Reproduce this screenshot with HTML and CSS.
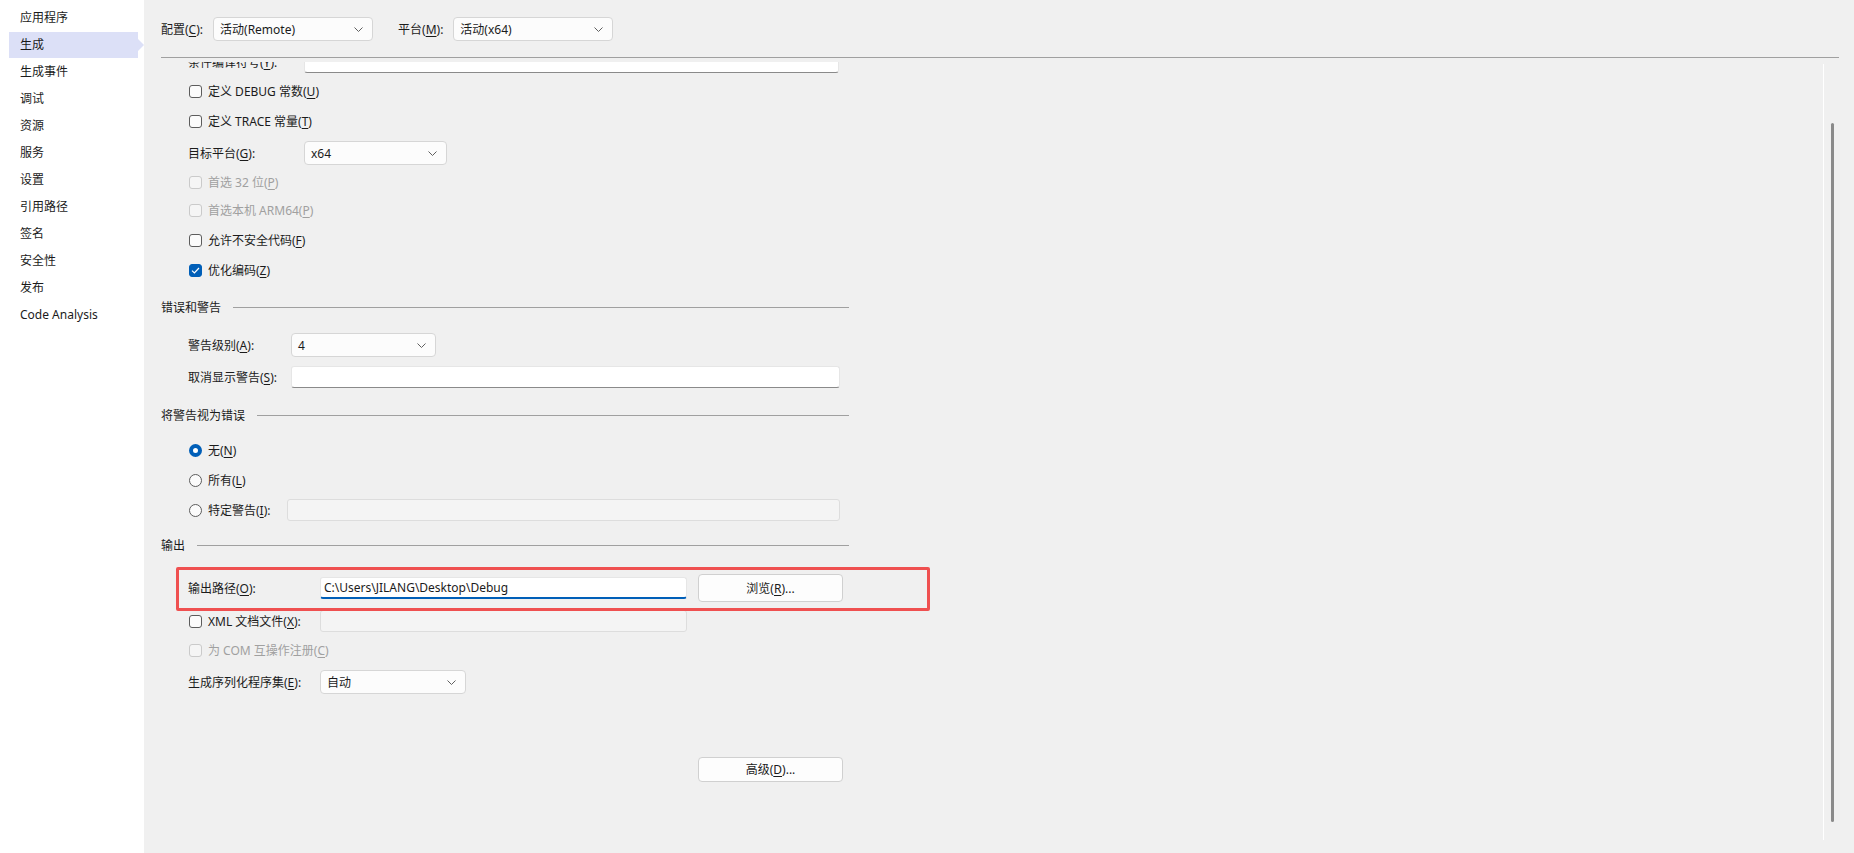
FILE: index.html
```html
<!DOCTYPE html>
<html lang="zh-CN">
<head>
    <meta charset="UTF-8">
    <title>生成</title>
    <link rel="stylesheet" href="styles.css">
</head>
<body>

    <div class="nav">
        <div class="nav-item">应用程序</div>
        <div class="nav-item active">生成</div>
        <div class="nav-item">生成事件</div>
        <div class="nav-item">调试</div>
        <div class="nav-item">资源</div>
        <div class="nav-item">服务</div>
        <div class="nav-item">设置</div>
        <div class="nav-item">引用路径</div>
        <div class="nav-item">签名</div>
        <div class="nav-item">安全性</div>
        <div class="nav-item">发布</div>
        <div class="nav-item">Code Analysis</div>
    </div>

    <div class="main">
        <div class="toolbar">
            <span class="top-label">配置(<u>C</u>):</span>
            <div class="select top">活动(Remote)<svg class="chev" width="9" height="5" viewBox="0 0 9 5"><path d="M0.5 0.5 L4.5 4.5 L8.5 0.5"/></svg></div>
            <span class="top-label second">平台(<u>M</u>):</span>
            <div class="select top">活动(x64)<svg class="chev" width="9" height="5" viewBox="0 0 9 5"><path d="M0.5 0.5 L4.5 4.5 L8.5 0.5"/></svg></div>
        </div>
        <div class="sep"></div>

        <div class="area">
            <div class="viewport">
                <div class="content">
                    <!-- 上方被滚动遮住的一行 -->
                    <div class="row first">
                        <span class="lbl lbl-a">条件编译符号(<u>Y</u>):</span>
                        <div class="input w535"></div>
                    </div>
                    <div class="row mt5"><span class="check"></span>定义 DEBUG 常数(<u>U</u>)</div>
                    <div class="row mt6"><span class="check"></span>定义 TRACE 常量(<u>T</u>)</div>
                    <div class="row mt8">
                        <span class="lbl lbl-a">目标平台(<u>G</u>):</span>
                        <div class="select w143">x64<svg class="chev" width="9" height="5" viewBox="0 0 9 5"><path d="M0.5 0.5 L4.5 4.5 L8.5 0.5"/></svg></div>
                    </div>
                    <div class="row mt5 dis"><span class="check off"></span>首选 32 位(<u>P</u>)</div>
                    <div class="row mt4 dis"><span class="check off"></span>首选本机 ARM64(<u>P</u>)</div>
                    <div class="row mt6"><span class="check"></span>允许不安全代码(<u>F</u>)</div>
                    <div class="row mt6"><span class="check on"><svg width="9" height="7" viewBox="0 0 9 7"><path d="M1 3.6 L3.4 6 L8 1" fill="none" stroke="#fff" stroke-width="1.2"/></svg></span>优化编码(<u>Z</u>)</div>

                    <div class="group-title mt13">错误和警告</div>
                    <div class="row mt14">
                        <span class="lbl lbl-b">警告级别(<u>A</u>):</span>
                        <div class="select w145">4<svg class="chev" width="9" height="5" viewBox="0 0 9 5"><path d="M0.5 0.5 L4.5 4.5 L8.5 0.5"/></svg></div>
                    </div>
                    <div class="row mt8">
                        <span class="lbl lbl-b">取消显示警告(<u>S</u>):</span>
                        <div class="input w549"></div>
                    </div>

                    <div class="group-title mt14">将警告视为错误</div>
                    <div class="row mt11"><span class="radio on"></span>无(<u>N</u>)</div>
                    <div class="row mt6"><span class="radio"></span>所有(<u>L</u>)</div>
                    <div class="row mt6">
                        <span class="lbl lbl-d"><span class="radio"></span>特定警告(<u>I</u>):</span>
                        <div class="input off w553"></div>
                    </div>

                    <div class="group-title mt11">输出</div>
                    <div class="row mt19 marked">
                        <span class="lbl lbl-c">输出路径(<u>O</u>):</span>
                        <div class="input focus w367">C:\Users\JILANG\Desktop\Debug</div>
                        <div class="btn">浏览(<u>R</u>)...</div>
                    </div>
                    <div class="row mt9">
                        <span class="lbl lbl-c"><span class="check"></span>XML 文档文件(<u>X</u>):</span>
                        <div class="input off w367"></div>
                    </div>
                    <div class="row mt5 dis"><span class="check off"></span>为 COM 互操作注册(<u>C</u>)</div>
                    <div class="row mt8">
                        <span class="lbl lbl-c">生成序列化程序集(<u>E</u>):</span>
                        <div class="select w146">自动<svg class="chev" width="9" height="5" viewBox="0 0 9 5"><path d="M0.5 0.5 L4.5 4.5 L8.5 0.5"/></svg></div>
                    </div>

                    <div class="row mt63">
                        <div class="btn adv">高级(<u>D</u>)...</div>
                    </div>
                </div>
            </div>
            <div class="vscroll"><div class="thumb"></div></div>
        </div>
    </div>

</body>
</html>
```

FILE: styles.css
```css
body { margin: 0; height: 853px; overflow: hidden; display: flex; background: #f0f0f0; color: #1b1b1b; font-family: "Noto Sans", "Noto Sans CJK SC", sans-serif; font-size: 12px; }
u { text-underline-offset: 2px; }

/* 左侧导航 */
.nav { width: 144px; flex: none; background: #fff; padding-top: 5px; box-sizing: border-box; }
.nav-item { position: relative; height: 26px; line-height: 26px; margin: 0 6px 1px 9px; padding-left: 11px; }
.nav-item.active { background: #dce0f7; }
.nav-item.active::after { content: ""; position: absolute; right: -6px; top: 7px; border-left: 6px solid #dce0f7; border-top: 6px solid transparent; border-bottom: 6px solid transparent; }

/* 右侧主区域 */
.main { flex: 1; min-width: 0; display: flex; flex-direction: column; }
.toolbar { display: flex; align-items: center; padding: 17px 0 0 17px; }
.top-label { margin-right: 10px; }
.top-label.second { margin-left: 25px; }
.sep { height: 1px; background: #a0a0a0; margin: 16px 15px 0 17px; }

.area { flex: 1; min-height: 0; display: flex; }
.viewport { flex: 1; overflow: hidden; margin-top: 4px; }
.content { margin-top: -12px; }
.vscroll { width: 31px; flex: none; box-sizing: border-box; margin: 6px 0 13px; border-left: 1px solid #fff; padding-left: 7px; }
.thumb { width: 3px; height: 699px; margin-top: 59px; background: #8a8a8a; border-radius: 2px; }

/* 行 */
.row { display: flex; align-items: center; height: 24px; margin-left: 44px; }
.row.dis { color: #a0a0a0; }
.mt4 { margin-top: 4px; }
.mt5 { margin-top: 5px; }
.mt6 { margin-top: 6px; }
.mt8 { margin-top: 8px; }
.mt9 { margin-top: 9px; }
.mt11 { margin-top: 11px; }
.mt13 { margin-top: 13px; }
.mt14 { margin-top: 14px; }
.mt19 { margin-top: 19px; }
.mt63 { margin-top: 63px; }

.group-title { display: flex; align-items: center; height: 24px; width: 688px; margin-left: 17px; }
.group-title::after { content: ""; flex: 1; height: 1px; background: #a0a0a0; margin-left: 12px; }

.lbl { flex: none; display: flex; align-items: center; }
.lbl-a { width: 116px; }
.lbl-b { width: 103px; }
.lbl-c { width: 132px; }
.lbl-d { width: 99px; }

/* 控件 */
.check { width: 13px; height: 13px; flex: none; box-sizing: border-box; border: 1px solid #5c5c5c; border-radius: 3px; background: #fbfbfb; margin: 0 6px 0 1px; display: flex; align-items: center; justify-content: center; }
.check.on { background: #005fb8; border-color: #005fb8; }
.check.off { border-color: #cacaca; background: #f5f5f5; }
.radio { width: 13px; height: 13px; flex: none; box-sizing: border-box; border: 1px solid #5c5c5c; border-radius: 50%; background: #fbfbfb; margin: 0 6px 0 1px; }
.radio.on { border: 4px solid #005fb8; background: #fff; }

.input { height: 22px; box-sizing: border-box; background: #fff; border: 1px solid #e6e6e6; border-bottom-color: #8a8a8a; border-radius: 3px; }
.input.off { background: #f4f4f4; border-color: #dddddd; }
.input.focus { display: flex; align-items: center; padding-left: 3px; border-bottom: 2px solid #005fb8; }
.w535 { width: 535px; }
.w549 { width: 549px; }
.w553 { width: 553px; }
.w367 { width: 367px; }

.select { height: 24px; box-sizing: border-box; display: flex; align-items: center; justify-content: space-between; padding: 0 9px 0 6px; background: #fcfcfc; border: 1px solid #d6d6d6; border-radius: 4px; }
.select.top { width: 160px; }
.w143 { width: 143px; }
.w145 { width: 145px; }
.w146 { width: 146px; }
.chev path { fill: none; stroke: #606060; stroke-width: 1; }

.btn { width: 145px; height: 28px; box-sizing: border-box; margin-left: 11px; display: flex; align-items: center; justify-content: center; background: #fdfdfd; border: 1px solid #d0d0d0; border-radius: 4px; }
.btn.adv { height: 25px; margin-left: 510px; }

/* 红色标注框 */
.marked { position: relative; }
.marked::after { content: ""; position: absolute; left: -12px; top: -9px; width: 754px; height: 44px; box-sizing: border-box; border: 3px solid #ef5050; border-radius: 2px; pointer-events: none; }
```
